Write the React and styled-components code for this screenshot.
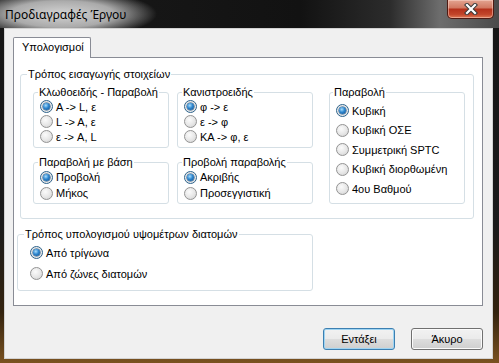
import React from 'react';
import styled, {createGlobalStyle} from 'styled-components';

const GlobalStyle = createGlobalStyle`
  html, body {
    margin: 0;
    padding: 0;
    background: #161616;
  }
  body {
    font-family: "Liberation Sans", "DejaVu Sans", sans-serif;
    color: #000;
  }
`

const Window = styled.div`
  width: 499px;
  height: 363px;
  display: flex;
  flex-direction: column;
  box-sizing: border-box;
  background: linear-gradient(180deg, #151515 0%, #1b1b1b 62%, #33230f 86%, #7a5220 100%);
`

const TitleBar = styled.div`
  height: 28px;
  flex-shrink: 0;
  display: flex;
  align-items: flex-start;
  background:
    radial-gradient(ellipse 95px 24px at 62px 14px, rgba(222,222,222,0.95) 0%, rgba(196,196,196,0.85) 55%, rgba(196,196,196,0) 100%),
    linear-gradient(90deg, #1a1a1a 0%, #121212 300px, #2c2c2c 390px, #6d6d6d 440px, #4a4a4a 499px);
`

const Title = styled.span`
  font-family: "Noto Sans", "Open Sans", sans-serif;
  font-size: 12px;
  line-height: 16px;
  margin: 7px 0 0 5px;
`

const CloseButton = styled.div`
  margin-left: auto;
  margin-right: 5px;
  width: 47px;
  height: 19px;
  box-sizing: border-box;
  border: 1px solid #4e1a12;
  border-top: none;
  border-radius: 0 0 5px 5px;
  background: linear-gradient(180deg, #e3a491 0%, #d27a63 42%, #b5321c 52%, #c2452a 80%, #df7a55 100%);
  box-shadow: inset 0 0 0 1px rgba(255, 225, 215, 0.45);
  display: flex;
  align-items: center;
  justify-content: center;
`

const Client = styled.div`
  flex: 1;
  margin: 0 6px 4px 4px;
  box-sizing: border-box;
  background: #f0f0f0;
  border: 1px solid #d2d2d2;
  padding: 8px 9px 8px 8px;
  display: flex;
  flex-direction: column;
`

const TabStrip = styled.div`
  display: flex;
`

const Tab = styled.div`
  position: relative;
  height: 21px;
  width: 78px;
  margin-bottom: -1px;
  box-sizing: border-box;
  border: 1px solid #898c95;
  border-bottom: none;
  border-radius: 2px 2px 0 0;
  background: #fff;
  padding: 0 8px;
  font-size: 11px;
  line-height: 19px;
  white-space: nowrap;
`

const Panel = styled.div`
  height: 249px;
  box-sizing: border-box;
  border: 1px solid #898c95;
  background: #fff;
  padding: 10px 0 0 3px;
`

const Group = styled.fieldset`
  margin: ${props => props.$margin || '0'};
  width: ${props => props.$width ? props.$width + 'px' : 'auto'};
  box-sizing: border-box;
  border: 1px solid #d5dfe5;
  border-radius: 3px;
  padding: ${props => props.$padding};
  min-width: 0;
`

const Legend = styled.legend`
  padding: 0 1px;
  margin-left: ${props => props.$offset}px;
  font-size: 11px;
  line-height: 13px;
  white-space: nowrap;
`

const Grid = styled.div`
  display: grid;
  grid-template-columns: 136px 136px 1fr;
  grid-template-rows: 62px 48px;
  column-gap: 8px;
  row-gap: 8px;
`

const SideGroup = styled(Group)`
  grid-column: 3;
  grid-row: 1 / span 2;
  justify-self: end;
  width: 136px;
`

const Option = styled.label`
  display: flex;
  align-items: center;
  gap: 3px;
  height: ${props => props.$h}px;
  font-size: 11px;
  white-space: nowrap;
`

const Dot = styled.span`
  width: 13px;
  height: 13px;
  flex-shrink: 0;
  box-sizing: border-box;
  border-radius: 50%;
  border: 1px solid ${props => props.$checked ? '#2c628b' : '#939393'};
  background: ${props => props.$checked
    ? 'radial-gradient(circle at 50% 50%, #f6f6f6 0%, #e2e2e2 100%)'
    : 'radial-gradient(circle at 40% 35%, #fbfbfb 0%, #e6e6e6 55%, #cdcdcd 100%)'};
  display: flex;
  align-items: center;
  justify-content: center;

  &::after {
    content: '';
    display: ${props => props.$checked ? 'block' : 'none'};
    width: 7px;
    height: 7px;
    border-radius: 50%;
    background: radial-gradient(circle at 40% 35%, #a9defc 0%, #2d86cf 45%, #0e4a86 100%);
    box-shadow: 0 0 0 0.5px #1b4f7e;
  }
`

const ButtonRow = styled.div`
  margin-top: 22px;
  display: flex;
  justify-content: flex-end;
  gap: 16px;
`

const Button = styled.div`
  width: 72px;
  height: 22px;
  box-sizing: border-box;
  border-radius: 3px;
  border: 1px solid ${props => props.$default ? '#3c7fb1' : '#707070'};
  box-shadow: inset 0 0 0 1px ${props => props.$default ? '#9fd4f2' : '#fbfbfb'};
  background: linear-gradient(180deg, #f2f2f2 0%, #ebebeb 48%, #dddddd 52%, #cfcfcf 100%);
  display: flex;
  align-items: center;
  justify-content: center;
  font-size: 11px;
`

const Radio = ({label, checked, h}) => (
  <Option $h={h}>
    <Dot $checked={checked} />
    {label}
  </Option>
)

const SubGroup = ({title, options, h, pb}) => (
  <Group $padding={`0 4px ${pb}px 6px`}>
    <Legend $offset={-2}>{title}</Legend>
    {options.map((o, i) => <Radio key={o} label={o} checked={i === 0} h={h} />)}
  </Group>
)

const CloseIcon = () => (
  <svg width="16" height="12" viewBox="0 0 16 12">
    <path d="M4 2 L12 10 M12 2 L4 10" stroke="#3a3a3a" strokeWidth="4.2" strokeLinecap="square" />
    <path d="M4 2 L12 10 M12 2 L4 10" stroke="#ffffff" strokeWidth="2.2" strokeLinecap="square" />
  </svg>
)

const App = () => (
  <Window>
    <GlobalStyle />
    <TitleBar>
      <Title>Προδιαγραφές Έργου</Title>
      <CloseButton><CloseIcon /></CloseButton>
    </TitleBar>
    <Client>
      <TabStrip>
        <Tab>Υπολογισμοί</Tab>
      </TabStrip>
      <Panel>
        <Group $width={454} $margin="0 0 0 3px" $padding="5px 8px 14px 12px">
          <Legend $offset={-6}>Τρόπος εισαγωγής στοιχείων</Legend>
          <Grid>
            <SubGroup title="Κλωθοειδής - Παραβολή" h={15} pb={3}
              options={['A -> L, ε', 'L -> A, ε', 'ε -> A, L']} />
            <SubGroup title="Κανιστροειδής" h={15} pb={3}
              options={['φ -> ε', 'ε -> φ', 'ΚΑ -> φ, ε']} />
            <SideGroup $padding="2px 4px 4px 6px">
              <Legend $offset={-3}>Παραβολή</Legend>
              {['Κυβική', 'Κυβική ΟΣΕ', 'Συμμετρική SPTC', 'Κυβική διορθωμένη', '4ου Βαθμού'].map((o, i) =>
                <Radio key={o} label={o} checked={i === 0} h={19.5} />
              )}
            </SideGroup>
            <SubGroup title="Παραβολή με βάση" h={16} pb={2}
              options={['Προβολή', 'Μήκος']} />
            <SubGroup title="Προβολή παραβολής" h={16} pb={2}
              options={['Ακριβής', 'Προσεγγιστική']} />
          </Grid>
        </Group>
        <Group $width={296} $margin="9px 0 0 0" $padding="1px 8px 6px 12px">
          <Legend $offset={-6}>Τρόπος υπολογισμού υψομέτρων διατομών</Legend>
          <Radio label="Από τρίγωνα" checked h={21} />
          <Radio label="Από ζώνες διατομών" h={21} />
        </Group>
      </Panel>
      <ButtonRow>
        <Button $default>Εντάξει</Button>
        <Button>Άκυρο</Button>
      </ButtonRow>
    </Client>
  </Window>
);

export default App;
